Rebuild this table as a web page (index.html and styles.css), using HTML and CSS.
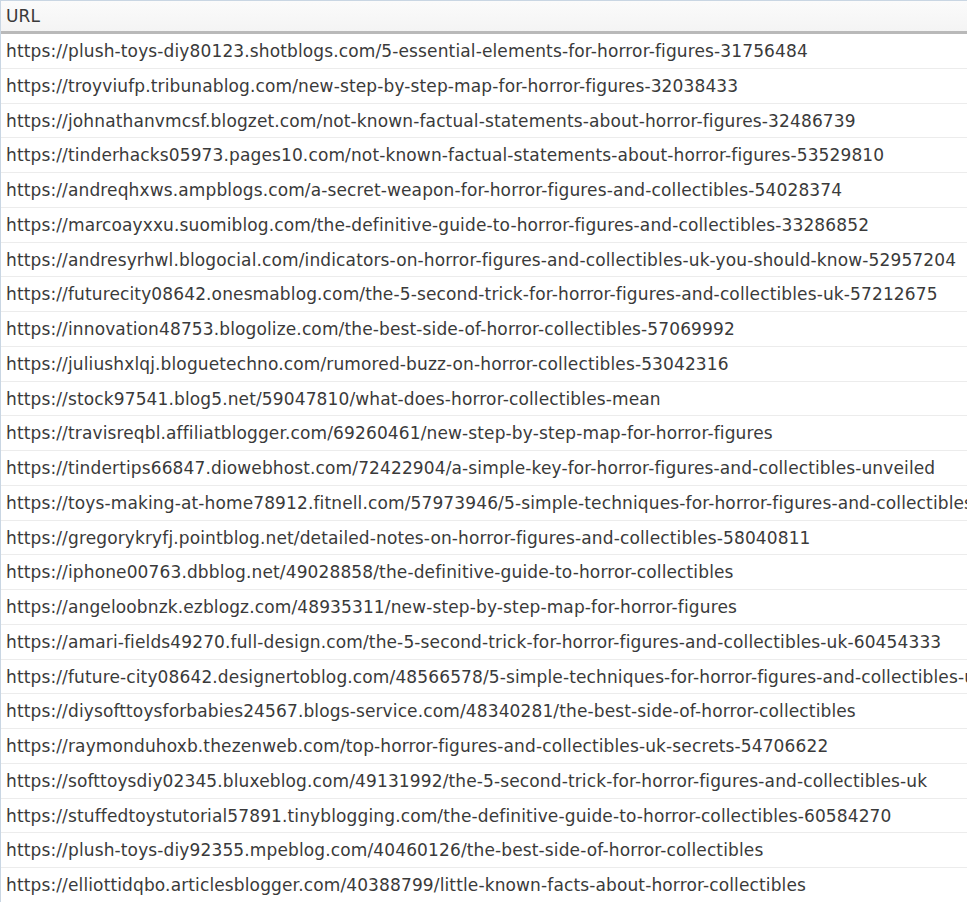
FILE: index.html
```html
<!DOCTYPE html>
<html>
<head>
<meta charset="utf-8">
<link rel="stylesheet" href="styles.css">
</head>
<body>
<div class="grid">
  <div class="head">URL</div>
  <div class="row">https://plush-toys-diy80123.shotblogs.com/5-essential-elements-for-horror-figures-31756484</div>
  <div class="row">https://troyviufp.tribunablog.com/new-step-by-step-map-for-horror-figures-32038433</div>
  <div class="row">https://johnathanvmcsf.blogzet.com/not-known-factual-statements-about-horror-figures-32486739</div>
  <div class="row">https://tinderhacks05973.pages10.com/not-known-factual-statements-about-horror-figures-53529810</div>
  <div class="row">https://andreqhxws.ampblogs.com/a-secret-weapon-for-horror-figures-and-collectibles-54028374</div>
  <div class="row">https://marcoayxxu.suomiblog.com/the-definitive-guide-to-horror-figures-and-collectibles-33286852</div>
  <div class="row">https://andresyrhwl.blogocial.com/indicators-on-horror-figures-and-collectibles-uk-you-should-know-52957204</div>
  <div class="row">https://futurecity08642.onesmablog.com/the-5-second-trick-for-horror-figures-and-collectibles-uk-57212675</div>
  <div class="row">https://innovation48753.blogolize.com/the-best-side-of-horror-collectibles-57069992</div>
  <div class="row">https://juliushxlqj.bloguetechno.com/rumored-buzz-on-horror-collectibles-53042316</div>
  <div class="row">https://stock97541.blog5.net/59047810/what-does-horror-collectibles-mean</div>
  <div class="row">https://travisreqbl.affiliatblogger.com/69260461/new-step-by-step-map-for-horror-figures</div>
  <div class="row">https://tindertips66847.diowebhost.com/72422904/a-simple-key-for-horror-figures-and-collectibles-unveiled</div>
  <div class="row">https://toys-making-at-home78912.fitnell.com/57973946/5-simple-techniques-for-horror-figures-and-collectibles</div>
  <div class="row">https://gregorykryfj.pointblog.net/detailed-notes-on-horror-figures-and-collectibles-58040811</div>
  <div class="row">https://iphone00763.dbblog.net/49028858/the-definitive-guide-to-horror-collectibles</div>
  <div class="row">https://angeloobnzk.ezblogz.com/48935311/new-step-by-step-map-for-horror-figures</div>
  <div class="row">https://amari-fields49270.full-design.com/the-5-second-trick-for-horror-figures-and-collectibles-uk-60454333</div>
  <div class="row">https://future-city08642.designertoblog.com/48566578/5-simple-techniques-for-horror-figures-and-collectibles-uk</div>
  <div class="row">https://diysofttoysforbabies24567.blogs-service.com/48340281/the-best-side-of-horror-collectibles</div>
  <div class="row">https://raymonduhoxb.thezenweb.com/top-horror-figures-and-collectibles-uk-secrets-54706622</div>
  <div class="row">https://softtoysdiy02345.bluxeblog.com/49131992/the-5-second-trick-for-horror-figures-and-collectibles-uk</div>
  <div class="row">https://stuffedtoystutorial57891.tinyblogging.com/the-definitive-guide-to-horror-collectibles-60584270</div>
  <div class="row">https://plush-toys-diy92355.mpeblog.com/40460126/the-best-side-of-horror-collectibles</div>
  <div class="row">https://elliottidqbo.articlesblogger.com/40388799/little-known-facts-about-horror-collectibles</div>
</div>
</body>
</html>
```
FILE: styles.css
```css
html, body {
  margin: 0;
  padding: 0;
  background: #ffffff;
  overflow: hidden;
}
.grid {
  width: 967px;
  height: 902px;
  overflow: hidden;
  border-top: 1px solid #c9d6e3;
  border-left: 1px solid #c9d6e3;
  box-sizing: border-box;
  font-family: "DejaVu Sans", Verdana, sans-serif;
  font-size: 17px;
  letter-spacing: 0.13px;
  color: #3a3a3a;
}
.head {
  height: 30px;
  line-height: 30px;
  padding-left: 5px;
  background: linear-gradient(#fbfbfb, #f4f4f4);
  border-bottom: 3px solid #b9b9b9;
  box-sizing: content-box;
}
.row {
  height: 34.76px;
  line-height: 34px;
  padding-left: 5px;
  white-space: nowrap;
  border-bottom: 1px solid #ececec;
  box-sizing: border-box;
}
```
